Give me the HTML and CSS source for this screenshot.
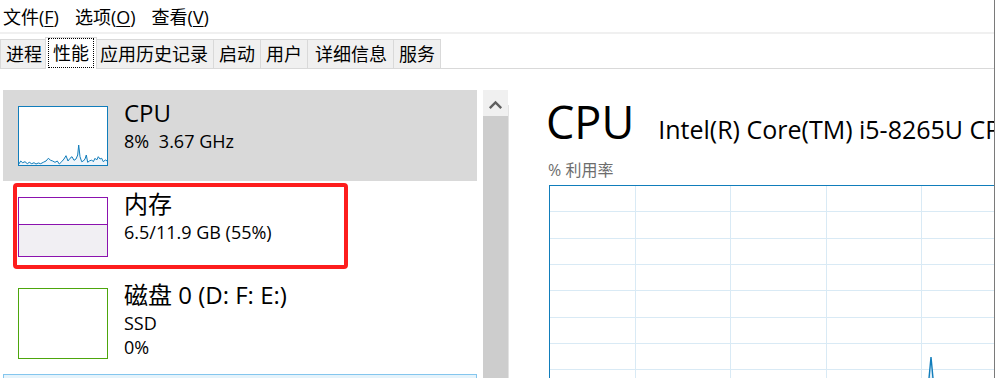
FILE: index.html
```html
<!DOCTYPE html>
<html lang="zh-CN">
<head>
<meta charset="utf-8">
<title>任务管理器</title>
<link rel="stylesheet" href="styles.css">
</head>
<body>
<div class="window">
  <div class="menubar">
    <span class="menu">文件(<u>F</u>)</span>
    <span class="menu">选项(<u>O</u>)</span>
    <span class="menu">查看(<u>V</u>)</span>
  </div>
  <div class="menusep"></div>
  <div class="tabstrip">
    <div class="tab first">进程</div>
    <div class="tab active"><span class="focus">性能</span></div>
    <div class="tab">应用历史记录</div>
    <div class="tab">启动</div>
    <div class="tab">用户</div>
    <div class="tab wide">详细信息</div>
    <div class="tab">服务</div>
  </div>
  <div class="content">
    <div class="sidebar">
      <div class="item selected">
        <div class="thumb thumb-cpu">
          <svg class="spark" width="88" height="58" viewBox="1 1 88 58">
            <polygon class="spark-fill" points="0.7,58.3 2.7,55 4.7,56.7 7,55.7 9.3,57.7 11.3,56.3 13.7,57.7 16,56.7 18,58 20.3,57 22.7,57.7 25.3,56.3 28,55 30.3,52.3 32.7,54.3 34.7,55 37,56.3 39.3,55 41.3,58 43.7,55.7 46,53 48,49.7 50,55 52,52.3 54,50.7 56,54.3 58,53 59.7,49 60.7,39 62,50.7 63.7,55.7 65.3,55 67,53 68.3,49 69.7,56.3 71.3,55 73.7,54 75.3,55.7 77,52.3 78.7,54 80.3,50.7 82,53 83.7,52.3 85.3,55.7 87.3,54 89.3,55 89.3,59 0.7,59"/>
            <polyline class="spark-line" points="0.7,58.3 2.7,55 4.7,56.7 7,55.7 9.3,57.7 11.3,56.3 13.7,57.7 16,56.7 18,58 20.3,57 22.7,57.7 25.3,56.3 28,55 30.3,52.3 32.7,54.3 34.7,55 37,56.3 39.3,55 41.3,58 43.7,55.7 46,53 48,49.7 50,55 52,52.3 54,50.7 56,54.3 58,53 59.7,49 60.7,39 62,50.7 63.7,55.7 65.3,55 67,53 68.3,49 69.7,56.3 71.3,55 73.7,54 75.3,55.7 77,52.3 78.7,54 80.3,50.7 82,53 83.7,52.3 85.3,55.7 87.3,54 89.3,55"/>
          </svg>
        </div>
        <div class="info">
          <div class="title">CPU</div>
          <div class="sub"><span class="pct">8%</span> 3.67 GHz</div>
        </div>
      </div>
      <div class="item mem">
        <div class="thumb thumb-mem">
          <div class="mem-fill" style="height:55%"></div>
        </div>
        <div class="info">
          <div class="title">内存</div>
          <div class="sub">6.5/11.9 GB (55%)</div>
        </div>
        <div class="annot"></div>
      </div>
      <div class="item disk">
        <div class="thumb thumb-disk"></div>
        <div class="info">
          <div class="title">磁盘 0 (D: F: E:)</div>
          <div class="sub">SSD</div>
          <div class="sub">0%</div>
        </div>
      </div>
      <div class="item hover"></div>
    </div>
    <div class="scrollbar">
      <div class="sb-up">
        <svg width="25" height="26" viewBox="0 0 25 26"><polyline points="6.8,18.2 12.5,12.5 18.2,18.2" fill="none" stroke="#606060" stroke-width="2.4"/></svg>
      </div>
      <div class="sb-thumb"></div>
    </div>
    <div class="main">
      <div class="header">
        <span class="big">CPU</span>
        <span class="model">Intel(R) Core(TM) i5-8265U CPU @ 1.60GHz</span>
      </div>
      <div class="util-label">% 利用率</div>
      <div class="graph">
        <svg width="460" height="220" viewBox="0 0 460 220">
          <g class="grid">
            <line x1="0" y1="26.5" x2="460" y2="26.5"/>
            <line x1="0" y1="53.5" x2="460" y2="53.5"/>
            <line x1="0" y1="79.5" x2="460" y2="79.5"/>
            <line x1="0" y1="105.5" x2="460" y2="105.5"/>
            <line x1="0" y1="132.5" x2="460" y2="132.5"/>
            <line x1="0" y1="158.5" x2="460" y2="158.5"/>
            <line x1="0" y1="184.5" x2="460" y2="184.5"/>
            <line x1="0" y1="211.5" x2="460" y2="211.5"/>
            <line x1="86.5" y1="0" x2="86.5" y2="220"/>
            <line x1="181.5" y1="0" x2="181.5" y2="220"/>
            <line x1="277.5" y1="0" x2="277.5" y2="220"/>
            <line x1="372.5" y1="0" x2="372.5" y2="220"/>
          </g>
          <polygon class="spike-fill" points="377.5,220 382,172 386.5,220"/>
          <polyline class="spike" points="377.5,220 382,172 386.5,220"/>
          <line class="frame" x1="0" y1="0.5" x2="460" y2="0.5"/>
          <line class="frame" x1="0.5" y1="0" x2="0.5" y2="220"/>
        </svg>
      </div>
    </div>
  </div>
</div>
</body>
</html>
```

FILE: styles.css
```css
html, body {
  margin: 0;
  padding: 0;
  background: #ffffff;
  overflow: hidden;
}

body {
  font-family: "Open Sans", "Noto Sans CJK SC", sans-serif;
  color: #000000;
}

.window {
  width: 994px;
  height: 378px;
  border-right: 1px solid #7a7a7a;
  overflow: hidden;
  background: #ffffff;
}

/* menu bar */
.menubar {
  display: flex;
  gap: 16px;
  box-sizing: border-box;
  height: 32px;
  padding: 3px 0 0 3px;
  font-size: 18px;
  line-height: 29px;
  white-space: nowrap;
}

.menu u {
  text-decoration-thickness: 1px;
  text-underline-offset: 2px;
}

.menusep {
  height: 2px;
  background: #f0f0f0;
}

/* tabs */
.tabstrip {
  display: flex;
  align-items: flex-end;
  box-sizing: border-box;
  height: 32px;
  margin-top: 3px;
  border-bottom: 1px solid #d9d9d9;
}

.tab {
  box-sizing: border-box;
  height: 29px;
  padding: 0 5px;
  margin-left: -1px;
  border: 1px solid #d9d9d9;
  border-bottom: none;
  background: #f0f0f0;
  font-size: 18px;
  line-height: 28px;
  white-space: nowrap;
}

.tab.first {
  margin-left: 0;
}

.tab.wide {
  padding: 0 6px 0 7px;
}

.tab.active {
  position: relative;
  z-index: 1;
  height: 32px;
  margin: 0 -2px -1px -3px;
  padding: 0 2px;
  background: #ffffff;
}

.focus {
  display: block;
  padding: 0 4px;
  border: 1px dotted #000000;
  line-height: 28px;
}

/* content */
.content {
  display: flex;
  height: 309px;
}

.sidebar {
  flex: none;
  width: 474px;
  margin-left: 3px;
  padding-top: 21px;
}

.item {
  position: relative;
  display: flex;
  padding-left: 15px;
}

.item.selected {
  background: #d9d9d9;
}

.thumb {
  flex: none;
  box-sizing: border-box;
  width: 90px;
  height: 60px;
  margin: 16px 0 15px 0;
  background: #ffffff;
  position: relative;
  overflow: hidden;
}

.thumb-cpu {
  border: 1px solid #117dbb;
}

.spark {
  display: block;
}

.spark-fill {
  fill: #eef5fb;
  stroke: none;
}

.spark-line {
  fill: none;
  stroke: #117dbb;
  stroke-width: 1;
}

.thumb-mem {
  border: 1px solid #8b12ae;
  display: flex;
  flex-direction: column;
  justify-content: flex-end;
}

.mem-fill {
  box-sizing: border-box;
  border-top: 1px solid #8b12ae;
  background: #f1eff3;
}

.thumb-disk {
  height: 71px;
  border: 1px solid #4da60c;
}

.info {
  margin-left: 16px;
  padding-top: 7px;
  white-space: nowrap;
}

.title {
  font-size: 24px;
  line-height: 32px;
}

.sub {
  font-size: 18px;
  line-height: 24px;
}

.pct {
  margin-right: 5px;
}

.annot {
  position: absolute;
  left: 10px;
  top: 2px;
  box-sizing: border-box;
  width: 335px;
  height: 86px;
  border: 4px solid #fd1d1d;
  border-radius: 4px;
}

.item.hover {
  box-sizing: border-box;
  height: 40px;
  border: 1px solid #84c6ee;
  background: #e5f3fb;
}

/* scrollbar */
.scrollbar {
  position: relative;
  flex: none;
  display: flex;
  flex-direction: column;
  width: 25px;
  margin: 21px 0 0 6px;
}

.scrollbar::after {
  content: "";
  position: absolute;
  right: -1px;
  top: 15px;
  bottom: 0;
  width: 1px;
  background: #e3e3e3;
}

.sb-up {
  height: 26px;
  background: #f0f0f0;
}

.sb-up svg {
  display: block;
}

.sb-thumb {
  flex: 1;
  background: #cdcdcd;
}

/* main pane */
.main {
  flex: 1;
  min-width: 0;
  padding-left: 41px;
  overflow: hidden;
}

.header {
  display: flex;
  align-items: baseline;
  gap: 24px;
  margin-left: -3px;
  padding-top: 25px;
  white-space: nowrap;
}

.big {
  font-size: 45px;
  line-height: 56px;
}

.model {
  font-size: 25px;
  line-height: 32px;
}

.util-label {
  margin: 9px 0 0 -1px;
  font-size: 16px;
  line-height: 22px;
  color: #6d6d6d;
  white-space: nowrap;
}

.graph {
  margin-top: 4px;
}

.graph svg {
  display: block;
}

.grid line {
  stroke: #d9eaf5;
  stroke-width: 1;
}

.frame {
  stroke: #117dbb;
  stroke-width: 1;
}

.spike {
  fill: none;
  stroke: #117dbb;
  stroke-width: 1.4;
}

.spike-fill {
  fill: #e3eff8;
  stroke: none;
}
```
